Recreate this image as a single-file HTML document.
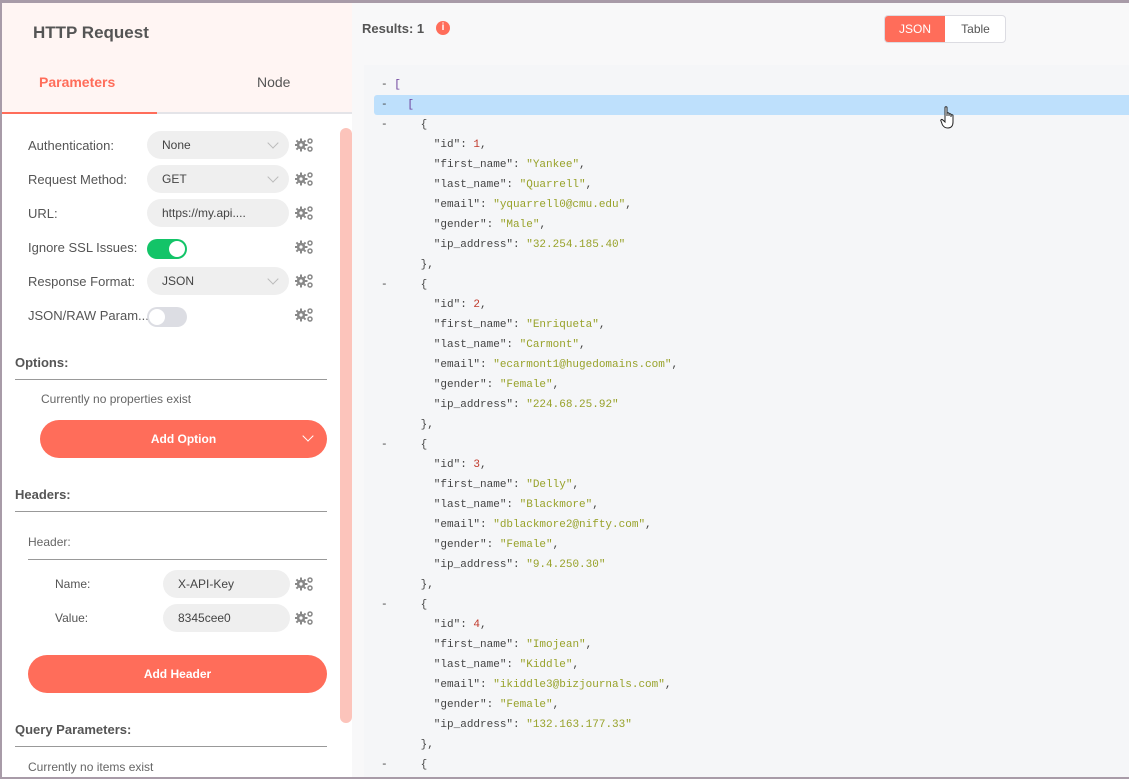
<!DOCTYPE html>
<html><head><meta charset="utf-8"><style>
*{margin:0;padding:0;box-sizing:border-box}
body{width:1129px;height:779px;overflow:hidden;background:#a89ba8;font-family:"Liberation Sans",sans-serif;position:relative}
.a{position:absolute}
#left{position:absolute;left:2px;top:3px;width:350px;height:774px;background:#fff;overflow:hidden}
#right{position:absolute;left:352px;top:3px;width:777px;height:774px;background:#f8f8f9;overflow:hidden}
.lbl{position:absolute;font-size:13px;color:#555}
.inp{position:absolute;left:145px;width:142px;height:28px;border-radius:14px;background:#efefef;font-size:12px;color:#444;padding:7px 0 0 15px}
.chev{position:absolute;right:12px;top:8px;width:8px;height:8px;border-right:1px solid #bbb;border-bottom:1px solid #bbb;transform:rotate(45deg)}
.gear{position:absolute;left:293px}
.sec{position:absolute;left:13px;font-size:13px;font-weight:bold;color:#555}
.hr{position:absolute;height:1px;background:#999}
.btn{position:absolute;background:#ff6d5a;color:#fff;font-weight:bold;font-size:12px;text-align:center;border-radius:19px}
.code{position:absolute;font-family:"Liberation Mono",monospace;font-size:11px;line-height:20px;color:#444;white-space:pre}
.s{color:#98a22a}.n{color:#c0392b}.p{color:#6a3d9a}
</style></head><body>
<div id="left">
 <div class="a" style="left:0;top:0;width:350px;height:110px;background:#fff5f3"></div>
 <div class="a" style="left:31px;top:20px;font-size:17px;font-weight:bold;color:#555">HTTP Request</div>
 <div class="a" style="left:37px;top:71px;font-size:14px;font-weight:bold;color:#ff6d5a">Parameters</div>
 <div class="a" style="left:255px;top:71px;font-size:14px;color:#555">Node</div>
 <div class="a" style="left:0;top:109px;width:350px;height:2px;background:#e4e4e8"></div>
 <div class="a" style="left:0;top:109px;width:155px;height:2px;background:#ff6d5a"></div>
 <div class="a" style="left:338px;top:125px;width:12px;height:595px;border-radius:6px;background:#fcc4bb"></div>

 <div class="lbl" style="left:26px;top:135px">Authentication:</div>
 <div class="inp" style="top:128px">None<div class="chev"></div></div>
 <div class="lbl" style="left:26px;top:169px">Request Method:</div>
 <div class="inp" style="top:162px">GET<div class="chev"></div></div>
 <div class="lbl" style="left:26px;top:203px">URL:</div>
 <div class="inp" style="top:196px">https://my.api....</div>
 <div class="lbl" style="left:26px;top:237px">Ignore SSL Issues:</div>
 <div class="a" style="left:145px;top:236px;width:40px;height:20px;border-radius:10px;background:#13c468"><div class="a" style="left:22px;top:2px;width:16px;height:16px;border-radius:8px;background:#fff"></div></div>
 <div class="lbl" style="left:26px;top:271px">Response Format:</div>
 <div class="inp" style="top:264px">JSON<div class="chev"></div></div>
 <div class="lbl" style="left:26px;top:305px">JSON/RAW Param...</div>
 <div class="a" style="left:145px;top:304px;width:40px;height:20px;border-radius:10px;background:#dcdde3"><div class="a" style="left:2px;top:2px;width:16px;height:16px;border-radius:8px;background:#fff"></div></div>

 <div class="sec" style="top:352px">Options:</div>
 <div class="hr" style="left:13px;top:376px;width:312px"></div>
 <div class="a" style="left:39px;top:389px;font-size:12px;color:#666">Currently no properties exist</div>
 <div class="btn" style="left:38px;top:417px;width:287px;height:38px;line-height:38px">Add Option<div class="a" style="right:15px;top:12px;width:8px;height:8px;border-right:1.5px solid #fff;border-bottom:1.5px solid #fff;transform:rotate(45deg)"></div></div>

 <div class="sec" style="top:484px">Headers:</div>
 <div class="hr" style="left:13px;top:508px;width:312px"></div>
 <div class="a" style="left:26px;top:532px;font-size:12px;color:#666">Header:</div>
 <div class="hr" style="left:26px;top:556px;width:299px"></div>
 <div class="lbl" style="left:53px;top:574px;font-size:12px">Name:</div>
 <div class="inp" style="left:161px;width:127px;top:567px">X-API-Key</div>
 <div class="lbl" style="left:53px;top:608px;font-size:12px">Value:</div>
 <div class="inp" style="left:161px;width:127px;top:601px">8345cee0</div>
 <div class="btn" style="left:26px;top:652px;width:299px;height:38px;line-height:38px">Add Header</div>

 <div class="sec" style="top:719px">Query Parameters:</div>
 <div class="hr" style="left:13px;top:743px;width:312px"></div>
 <div class="a" style="left:26px;top:757px;font-size:12px;color:#666">Currently no items exist</div>
 <svg class="gear" style="top:134px" width="20" height="16" viewBox="0 0 20 16"><g fill="#888"><circle cx="6" cy="8" r="4.2"/><rect x="5" y="1.5" width="2" height="13"/><rect x="-0.5" y="7" width="13" height="2"/><rect x="5" y="1.5" width="2" height="13" transform="rotate(45 6 8)"/><rect x="5" y="1.5" width="2" height="13" transform="rotate(-45 6 8)"/></g><circle cx="6" cy="8" r="1.6" fill="#fff"/><g fill="none" stroke="#888" stroke-width="1.5"><circle cx="15" cy="4" r="2"/><circle cx="15" cy="12" r="2"/></g></svg>
 <svg class="gear" style="top:168px" width="20" height="16" viewBox="0 0 20 16"><g fill="#888"><circle cx="6" cy="8" r="4.2"/><rect x="5" y="1.5" width="2" height="13"/><rect x="-0.5" y="7" width="13" height="2"/><rect x="5" y="1.5" width="2" height="13" transform="rotate(45 6 8)"/><rect x="5" y="1.5" width="2" height="13" transform="rotate(-45 6 8)"/></g><circle cx="6" cy="8" r="1.6" fill="#fff"/><g fill="none" stroke="#888" stroke-width="1.5"><circle cx="15" cy="4" r="2"/><circle cx="15" cy="12" r="2"/></g></svg>
 <svg class="gear" style="top:202px" width="20" height="16" viewBox="0 0 20 16"><g fill="#888"><circle cx="6" cy="8" r="4.2"/><rect x="5" y="1.5" width="2" height="13"/><rect x="-0.5" y="7" width="13" height="2"/><rect x="5" y="1.5" width="2" height="13" transform="rotate(45 6 8)"/><rect x="5" y="1.5" width="2" height="13" transform="rotate(-45 6 8)"/></g><circle cx="6" cy="8" r="1.6" fill="#fff"/><g fill="none" stroke="#888" stroke-width="1.5"><circle cx="15" cy="4" r="2"/><circle cx="15" cy="12" r="2"/></g></svg>
 <svg class="gear" style="top:236px" width="20" height="16" viewBox="0 0 20 16"><g fill="#888"><circle cx="6" cy="8" r="4.2"/><rect x="5" y="1.5" width="2" height="13"/><rect x="-0.5" y="7" width="13" height="2"/><rect x="5" y="1.5" width="2" height="13" transform="rotate(45 6 8)"/><rect x="5" y="1.5" width="2" height="13" transform="rotate(-45 6 8)"/></g><circle cx="6" cy="8" r="1.6" fill="#fff"/><g fill="none" stroke="#888" stroke-width="1.5"><circle cx="15" cy="4" r="2"/><circle cx="15" cy="12" r="2"/></g></svg>
 <svg class="gear" style="top:270px" width="20" height="16" viewBox="0 0 20 16"><g fill="#888"><circle cx="6" cy="8" r="4.2"/><rect x="5" y="1.5" width="2" height="13"/><rect x="-0.5" y="7" width="13" height="2"/><rect x="5" y="1.5" width="2" height="13" transform="rotate(45 6 8)"/><rect x="5" y="1.5" width="2" height="13" transform="rotate(-45 6 8)"/></g><circle cx="6" cy="8" r="1.6" fill="#fff"/><g fill="none" stroke="#888" stroke-width="1.5"><circle cx="15" cy="4" r="2"/><circle cx="15" cy="12" r="2"/></g></svg>
 <svg class="gear" style="top:304px" width="20" height="16" viewBox="0 0 20 16"><g fill="#888"><circle cx="6" cy="8" r="4.2"/><rect x="5" y="1.5" width="2" height="13"/><rect x="-0.5" y="7" width="13" height="2"/><rect x="5" y="1.5" width="2" height="13" transform="rotate(45 6 8)"/><rect x="5" y="1.5" width="2" height="13" transform="rotate(-45 6 8)"/></g><circle cx="6" cy="8" r="1.6" fill="#fff"/><g fill="none" stroke="#888" stroke-width="1.5"><circle cx="15" cy="4" r="2"/><circle cx="15" cy="12" r="2"/></g></svg>
 <svg class="gear" style="top:573px" width="20" height="16" viewBox="0 0 20 16"><g fill="#888"><circle cx="6" cy="8" r="4.2"/><rect x="5" y="1.5" width="2" height="13"/><rect x="-0.5" y="7" width="13" height="2"/><rect x="5" y="1.5" width="2" height="13" transform="rotate(45 6 8)"/><rect x="5" y="1.5" width="2" height="13" transform="rotate(-45 6 8)"/></g><circle cx="6" cy="8" r="1.6" fill="#fff"/><g fill="none" stroke="#888" stroke-width="1.5"><circle cx="15" cy="4" r="2"/><circle cx="15" cy="12" r="2"/></g></svg>
 <svg class="gear" style="top:607px" width="20" height="16" viewBox="0 0 20 16"><g fill="#888"><circle cx="6" cy="8" r="4.2"/><rect x="5" y="1.5" width="2" height="13"/><rect x="-0.5" y="7" width="13" height="2"/><rect x="5" y="1.5" width="2" height="13" transform="rotate(45 6 8)"/><rect x="5" y="1.5" width="2" height="13" transform="rotate(-45 6 8)"/></g><circle cx="6" cy="8" r="1.6" fill="#fff"/><g fill="none" stroke="#888" stroke-width="1.5"><circle cx="15" cy="4" r="2"/><circle cx="15" cy="12" r="2"/></g></svg>
</div>

<div id="right">
 <div class="a" style="left:10px;top:18px;font-size:13px;font-weight:bold;color:#555">Results: 1</div>
 <div class="a" style="left:84px;top:18px;width:14px;height:14px;border-radius:7px;background:#ff6d5a;color:#fff;font-size:10px;font-weight:bold;text-align:center;line-height:14px">i</div>
 <div class="a" style="left:532px;top:12px;width:122px;height:28px;border:1px solid #dcdce2;border-radius:4px;background:#fff;overflow:hidden">
  <div class="a" style="left:0;top:0;width:60px;height:28px;background:#ff6d5a;color:#fff;font-size:12px;text-align:center;line-height:27px">JSON</div>
  <div class="a" style="left:60px;top:0;width:61px;height:28px;color:#555;font-size:12px;text-align:center;line-height:27px">Table</div>
 </div>
 <div class="a" style="left:12px;top:62px;width:765px;height:712px;background:#f5f6f8"></div>
 <div class="a" style="left:22px;top:92px;width:755px;height:20px;background:#bee0fc;border-radius:3px 0 0 3px"></div>
 <div class="code" style="left:29px;top:72px">- <span class="p">[</span>
-   <span class="p">[</span>
-     {
        "id": <span class="n">1</span>,
        "first_name": <span class="s">"Yankee"</span>,
        "last_name": <span class="s">"Quarrell"</span>,
        "email": <span class="s">"yquarrell0@cmu.edu"</span>,
        "gender": <span class="s">"Male"</span>,
        "ip_address": <span class="s">"32.254.185.40"</span>
      },
-     {
        "id": <span class="n">2</span>,
        "first_name": <span class="s">"Enriqueta"</span>,
        "last_name": <span class="s">"Carmont"</span>,
        "email": <span class="s">"ecarmont1@hugedomains.com"</span>,
        "gender": <span class="s">"Female"</span>,
        "ip_address": <span class="s">"224.68.25.92"</span>
      },
-     {
        "id": <span class="n">3</span>,
        "first_name": <span class="s">"Delly"</span>,
        "last_name": <span class="s">"Blackmore"</span>,
        "email": <span class="s">"dblackmore2@nifty.com"</span>,
        "gender": <span class="s">"Female"</span>,
        "ip_address": <span class="s">"9.4.250.30"</span>
      },
-     {
        "id": <span class="n">4</span>,
        "first_name": <span class="s">"Imojean"</span>,
        "last_name": <span class="s">"Kiddle"</span>,
        "email": <span class="s">"ikiddle3@bizjournals.com"</span>,
        "gender": <span class="s">"Female"</span>,
        "ip_address": <span class="s">"132.163.177.33"</span>
      },
-     {</div>
 <svg class="a" style="left:588px;top:102px" width="18" height="26" viewBox="0 0 18 26"><path d="M5 2.5c0-1 2-1 2 0V11V8.5c0-1 2-1 2 0V11V9.5c0-1 2-1 2 0V12V10.5c0-1 2-1 2 0V17c0 4-2 6-5 6s-4-1-5.5-3L1 16c-.7-1 .5-2 1.5-1.3L5 17z" fill="#fff" stroke="#222" stroke-width="1"/></svg>
</div>
</body></html>
